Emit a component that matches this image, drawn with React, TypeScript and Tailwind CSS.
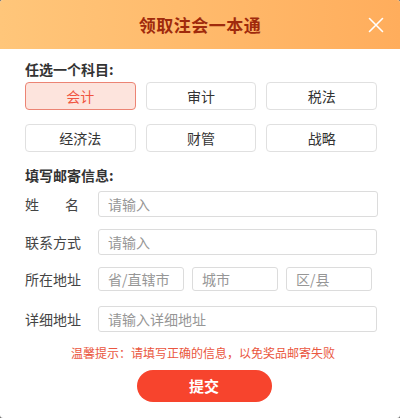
import { useState } from 'react';

const subjects = ['会计', '审计', '税法', '经济法', '财管', '战略'];

function Field({ placeholder, className }: { placeholder: string; className?: string }) {
    return (
        <input
            placeholder={placeholder}
            className={`h-full border border-[#dcdcdc] rounded-[3px] pl-[9px] text-[14px] text-[#333] placeholder:text-[#969696] outline-none ${className ?? ''}`}
        />
    );
}

export default function App() {
    const [active, setActive] = useState('会计');

    return (
        <div className="w-[400px] h-[418px] bg-[#6b6b6b] font-['Noto_Sans_CJK_SC','Noto_Sans',sans-serif]">
            <div className="w-full h-full bg-white rounded-[3px] overflow-hidden">
                {/* Header */}
                <div className="relative h-[49px] flex items-center justify-center bg-gradient-to-r from-[#ffc67a] to-[#ffad5c]">
                    <h2 className="text-[17px] font-bold text-[#a02a0c] tracking-[0.5px]">领取注会一本通</h2>
                    <button className="absolute right-[16px] top-[17px] w-[16px] h-[16px] flex items-center justify-center">
                        <svg width="16" height="16" viewBox="0 0 16 16" fill="none" stroke="#ffffff" strokeWidth="1.6" strokeLinecap="round">
                            <path d="M1.5 1.5 L14.5 14.5 M14.5 1.5 L1.5 14.5" />
                        </svg>
                    </button>
                </div>

                <div className="pl-[25px] pr-[23px]">
                    <p className="mt-[10px] leading-[20px] text-[14px] font-bold text-[#333]">任选一个科目:</p>

                    {/* Subjects */}
                    <div className="mt-[3px] grid grid-cols-3 gap-x-[10px] gap-y-[14px]">
                        {subjects.map((s) => (
                            <button
                                key={s}
                                onClick={() => setActive(s)}
                                className={`h-[28px] rounded-[4px] border text-[14px] leading-none ${
                                    active === s
                                        ? 'bg-[#fde4dd] border-[#ec8474] text-[#f0543f]'
                                        : 'bg-white border-[#e0e0e0] text-[#333]'
                                }`}
                            >
                                {s}
                            </button>
                        ))}
                    </div>

                    <p className="mt-[13px] leading-[20px] text-[14px] font-bold text-[#333]">填写邮寄信息:</p>

                    {/* Form */}
                    <div className="mt-[6px] flex items-center h-[26px]">
                        <span className="w-[73px] shrink-0">
                            <span className="w-[54px] flex justify-between text-[14px] text-[#444]">
                                <span>姓</span>
                                <span>名</span>
                            </span>
                        </span>
                        <Field placeholder="请输入" className="flex-1 min-w-0 mr-[-1px]" />
                    </div>

                    <div className="mt-[12px] flex items-center h-[26px]">
                        <span className="w-[73px] shrink-0 text-[14px] text-[#444]">联系方式</span>
                        <Field placeholder="请输入" className="flex-1 min-w-0" />
                    </div>

                    <div className="mt-[12px] flex items-center h-[24px]">
                        <span className="w-[73px] shrink-0 text-[14px] text-[#444]">所在地址</span>
                        <div className="flex gap-[8px] h-full">
                            <Field placeholder="省/直辖市" className="w-[86px]" />
                            <Field placeholder="城市" className="w-[86px]" />
                            <Field placeholder="区/县" className="w-[86px]" />
                        </div>
                    </div>

                    <div className="mt-[15px] flex items-center h-[26px]">
                        <span className="w-[73px] shrink-0 text-[14px] text-[#444]">详细地址</span>
                        <Field placeholder="请输入详细地址" className="flex-1 min-w-0" />
                    </div>

                    <p className="mt-[13px] leading-[16px] text-[12px] text-[#ea5640] text-center pl-[4px]">
                        温馨提示：请填写正确的信息，以免奖品邮寄失败
                    </p>

                    <div className="mt-[9px] flex justify-center pl-[6px]">
                        <button className="w-[135px] h-[32px] rounded-full bg-[#f7442d] text-white text-[15px] font-bold">
                            提交
                        </button>
                    </div>
                </div>
            </div>
        </div>
    );
}
